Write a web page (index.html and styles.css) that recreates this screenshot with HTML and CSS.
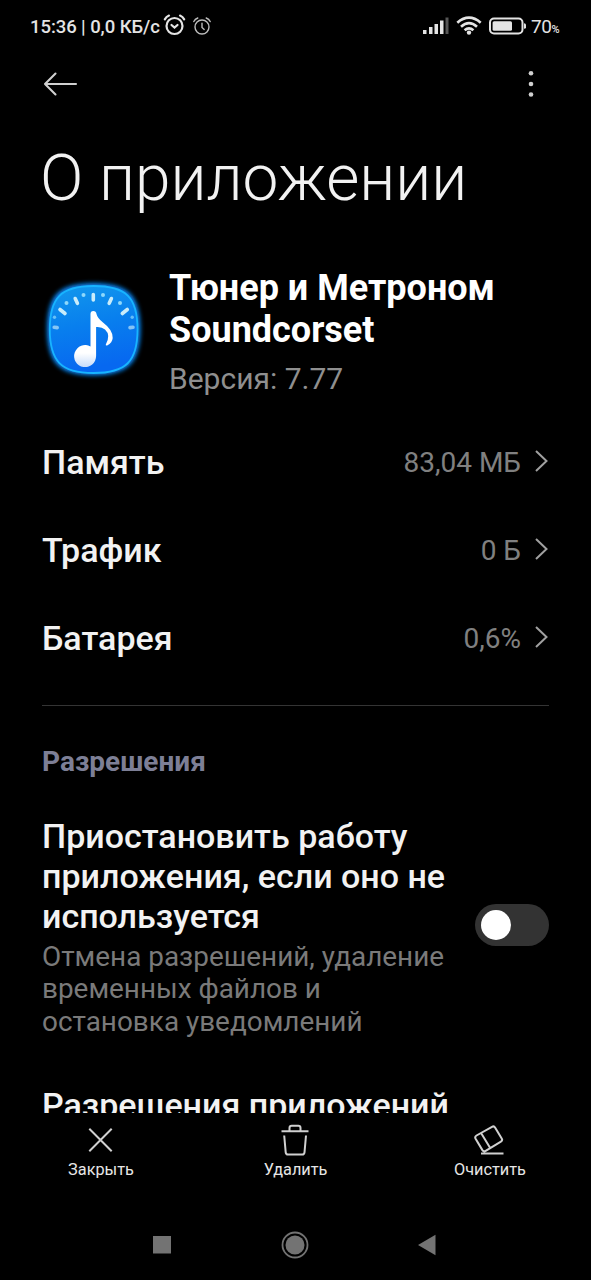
FILE: index.html
```html
<!DOCTYPE html>
<html lang="ru">
<head>
<meta charset="utf-8">
<title>О приложении</title>
<link rel="stylesheet" href="styles.css">
</head>
<body>
<div class="screen">
  <header class="status">
    <span class="status-text">15:36 | 0,0 КБ/с</span>
    <svg class="alarm" width="24" height="24" viewBox="0 0 24 24" fill="none" stroke="#e4e4e4" stroke-width="2.200" stroke-linecap="round"><circle cx="11.500" cy="13" r="8"/><path d="M1.800 6.400Q3.300 3.800 6 2.600M21.200 6.400Q19.700 3.800 17 2.600M8.500 12l3 2.600 3-2.600"/></svg>
    <svg class="alarm-thin" width="20" height="20" viewBox="0 0 20 20" fill="none" stroke="#bdbdbd" stroke-width="1.400" stroke-linecap="round"><circle cx="10" cy="11" r="7"/><path d="M1.800 5.500Q3 3 5.800 2M18.200 5.500Q17 3 14.200 2M10 7.200v4.200l2.200 2"/></svg>
    <div class="status-right">
      <svg width="28" height="20" viewBox="0 0 28 20" fill="#e4e4e4"><rect x="1" y="14" width="3.500" height="4"/><rect x="7" y="11" width="3.500" height="7"/><rect x="12.500" y="8" width="3.500" height="10"/><rect x="18" y="4.500" width="3.500" height="13.500"/><rect x="23.500" y="1.500" width="3" height="16.500" fill="#555"/></svg>
      <svg class="wifi" width="28" height="20" viewBox="0 0 28 20" fill="none" stroke="#e4e4e4" stroke-width="2.700"><path d="M2.300 6.700Q14-3.300 25.700 6.700M6 10.700Q14 3.700 22 10.700M9.600 14.200Q14 10.400 18.400 14.200"/><circle cx="14" cy="16.600" r="2.200" fill="#e4e4e4" stroke="none"/></svg>
      <svg class="battery" width="38" height="18" viewBox="0 0 38 18"><rect x="1" y="1.500" width="32.500" height="15" rx="4" fill="none" stroke="#e4e4e4" stroke-width="2"/><rect x="3.600" y="4.200" width="19.400" height="9.600" rx="1.500" fill="#e4e4e4"/><path d="M35 6.300q2 0 2 1.500v2.400q0 1.500-2 1.500z" fill="#e4e4e4"/></svg>
      <span class="percent">70<small>%</small></span>
    </div>
  </header>

  <nav class="actions">
    <svg width="36" height="26" viewBox="0 0 36 26" fill="none" stroke="#d0d0d0" stroke-width="2.100" stroke-linecap="round" stroke-linejoin="round"><path d="M34 13H3M13.500 2.500L3 13l10.500 10.500"/></svg>
    <svg width="6" height="28" viewBox="0 0 6 28" fill="#d0d0d0"><circle cx="3" cy="3.300" r="2.300"/><circle cx="3" cy="14" r="2.300"/><circle cx="3" cy="24.500" r="2.300"/></svg>
  </nav>

  <main class="content">
    <h1 class="title">О приложении</h1>
    <section class="app">
      <svg class="app-icon" width="110" height="110" viewBox="0 0 110 110">
        <defs>
          <linearGradient id="tile" x1="0" y1="0" x2="0.200" y2="1"><stop offset="0" stop-color="#1398ec"/><stop offset="0.500" stop-color="#087fee"/><stop offset="1" stop-color="#0768f0"/></linearGradient>
          <linearGradient id="note" x1="0" y1="0" x2="0" y2="1"><stop offset="0.750" stop-color="#fff"/><stop offset="1" stop-color="#c7dcfa"/></linearGradient>
          <filter id="glow" x="-20%" y="-20%" width="140%" height="140%"><feGaussianBlur stdDeviation="2"/></filter>
        </defs>
        <path d="M53.500 10C87 10 98.500 21 98.500 54S87 98.500 53.500 98.500 9 87 9 54 20 10 53.500 10Z" fill="#1477e8" stroke="#0b86f4" stroke-width="4" filter="url(#glow)"/>
        <path d="M53.500 11C86 11 97.500 22 97.500 54.300S86 98 53.500 98 9.800 86 9.800 54.300 21 11 53.500 11Z" fill="url(#tile)" stroke="#18b4ff" stroke-width="1.800"/>
        <g stroke="#c9ecfa" stroke-width="3.600" stroke-linecap="round"><path d="M53.300 19.500v5.500M35.200 23.500l2.200 4.800M71.400 23.500l-2.200 4.800M20 34.500l5 4M87.300 34.500l-5 4"/><path d="M14.200 52.200l3 .4M93 52.200l-3 .4" opacity=".65"/></g>
        <g fill="#8ed8fb"><circle cx="43.500" cy="20" r="2"/><circle cx="63" cy="20" r="2"/><circle cx="26.500" cy="28" r="2"/><circle cx="80" cy="28" r="2"/><circle cx="14.500" cy="42.300" r="1.700" opacity=".7"/><circle cx="92.200" cy="42.300" r="1.700" opacity=".7"/></g>
        <path d="M50.500 39q0-3 2.800-3t3.200 3q.8 4 6.500 8.500 10 7.500 9.700 15.500-.3 4.500-5.500 7.500-1.800.3-1.400-1Q71 60 65 54.500q-3.200-3-8.900-2.500V81A11 11 0 1 1 50.500 71.500Z" fill="url(#note)"/>
      </svg>
      <div>
        <h2 class="app-name">Тюнер и Метроном<br>Soundcorset</h2>
        <p class="version">Версия: 7.77</p>
      </div>
    </section>

    <ul class="rows">
      <li class="row"><span class="label">Память</span><span class="value">83,04 МБ</span><svg class="chevron" width="14" height="24" viewBox="0 0 14 24"><path d="M1 2l10.500 10L1 22"/></svg></li>
      <li class="row"><span class="label">Трафик</span><span class="value">0 Б</span><svg class="chevron" width="14" height="24" viewBox="0 0 14 24"><path d="M1 2l10.500 10L1 22"/></svg></li>
      <li class="row"><span class="label">Батарея</span><span class="value">0,6%</span><svg class="chevron" width="14" height="24" viewBox="0 0 14 24"><path d="M1 2l10.500 10L1 22"/></svg></li>
    </ul>

    <section class="permissions">
      <h3 class="section-title">Разрешения</h3>
      <div class="setting">
        <div>
          <p class="setting-name">Приостановить работу<br>приложения, если оно не<br>используется</p>
          <p class="setting-note">Отмена разрешений, удаление<br>временных файлов и<br>остановка уведомлений</p>
        </div>
        <div class="toggle"><div class="knob"></div></div>
      </div>
      <p class="setting-name next">Разрешения приложений</p>
    </section>
  </main>

  <footer class="toolbar">
    <div class="tool">
      <svg width="32" height="32" viewBox="0 0 32 32"><path d="M4.300 4.800l22.400 22.400M26.700 4.800L4.300 27.200"/></svg>
      <span>Закрыть</span>
    </div>
    <div class="tool">
      <svg width="32" height="32" viewBox="0 0 32 32"><path d="M1.500 7.300h27M9.500 7V4q0-2.200 2.200-2.200h6.600q2.200 0 2.200 2.200v3M4.200 11.500l1.500 16.800q.2 2.200 2.400 2.200h14q2.200 0 2.400-2.200L26 11.500"/></svg>
      <span>Удалить</span>
    </div>
    <div class="tool">
      <svg width="32" height="32" viewBox="0 0 32 32"><path d="M7 29.500H29.500M2.500 11.500L18 2.800q2-1.100 3.200.9l6.500 10.700q1.200 2-.8 3.200l-15.200 9.300q-2 1.200-3.300-.8L1.600 14.700q-1.100-2 .9-3.200ZM7.200 9.200l9 14.800"/></svg>
      <span>Очистить</span>
    </div>
  </footer>

  <div class="navbar">
    <svg width="28" height="28" viewBox="0 0 28 28" fill="#737373"><rect x="5" y="5" width="18" height="17.500"/></svg>
    <svg width="28" height="28" viewBox="0 0 28 28"><circle cx="14" cy="14" r="12.500" fill="none" stroke="#737373" stroke-width="1.800"/><circle cx="14" cy="14" r="9.500" fill="#737373"/></svg>
    <svg width="28" height="28" viewBox="0 0 28 28" fill="#737373"><path d="M4 14L21.500 3.800v20.400Z"/></svg>
  </div>
</div>
</body>
</html>
```
FILE: styles.css
```css
* { box-sizing: border-box; margin: 0; padding: 0; }
body { background: #000; color: #f2f2f2; font-family: Roboto, sans-serif; }
ul { list-style: none; }
svg { display: block; flex: none; }
.screen { width: 591px; height: 1280px; display: flex; flex-direction: column; overflow: hidden; background: #000; }

.status { height: 52px; display: flex; align-items: center; padding: 0 31px 0 30px; font-size: 18.5px; color: #e4e4e4; white-space: nowrap; flex: none; }
.status-text { font-weight: 500; width: 133px; letter-spacing: -0.07px; padding-top: 2px; }
.alarm { margin-top: -3px; }
.alarm-thin { margin-left: 5px; margin-top: -1px; }
.status-right { margin-left: auto; display: flex; align-items: center; }
.status-right svg { margin-top: -1px; }
.status-right .wifi { margin-left: 5px; }
.status-right .battery { margin-left: 6px; }
.percent { margin-left: 4px; width: 29px; font-size: 19px; letter-spacing: -0.4px; }
.percent small { font-size: 11px; font-weight: 500; letter-spacing: 0; }

.actions { height: 64px; display: flex; align-items: center; justify-content: space-between; padding: 0 57px 0 42px; flex: none; }

.content { height: 997px; padding: 25px 42px 0; overflow: hidden; flex: none; }
.title { font-size: 64px; font-weight: 300; line-height: 76px; white-space: nowrap; margin-left: -2px; }
.app { display: flex; margin-top: 50px; height: 151px; }
.app-icon { margin: 8px 19px 0 -2px; }
.app-name { font-size: 36px; font-weight: 700; line-height: 42px; color: #fff; white-space: nowrap; }
.version { font-size: 30px; line-height: 36px; color: #8f8f8f; margin-top: 10px; }

.row { height: 88px; display: flex; align-items: center; }
.label { font-size: 34px; font-weight: 500; }
.value { margin: 0 0 0 auto; font-size: 28px; color: #808080; }
.chevron { margin: -2px 0 0 14px; fill: none; stroke: #a0a0a0; stroke-width: 2; }

.permissions { margin-top: 23px; border-top: 1px solid #343434; padding-top: 40px; }
.section-title { font-size: 28px; line-height: 32px; font-weight: 700; color: #7d7f96; }
.setting { display: flex; align-items: center; justify-content: space-between; margin-top: 38px; height: 218px; white-space: nowrap; }
.setting > div:first-child { padding-top: 4px; }
.setting-name { font-size: 34px; line-height: 40px; font-weight: 500; }
.setting-note { font-size: 27.9px; line-height: 32.3px; color: #7a7a7a; margin-top: 5px; }
.toggle { width: 74px; height: 42px; border-radius: 21px; background: #333; padding: 6px; }
.knob { width: 30px; height: 30px; border-radius: 50%; background: #fff; }
.next { margin-top: 51px; white-space: nowrap; }

.toolbar { height: 97px; display: grid; grid-template-columns: repeat(3, 194.5px); justify-content: center; padding-top: 11px; flex: none; }
.tool { display: flex; flex-direction: column; align-items: center; font-size: 16.3px; line-height: 20px; gap: 4px; color: #e6e6e6; }
.tool svg { fill: none; stroke: #d0d0d0; stroke-width: 2; }

.navbar { display: flex; justify-content: space-between; padding: 21px 149px 0 148px; }
```
